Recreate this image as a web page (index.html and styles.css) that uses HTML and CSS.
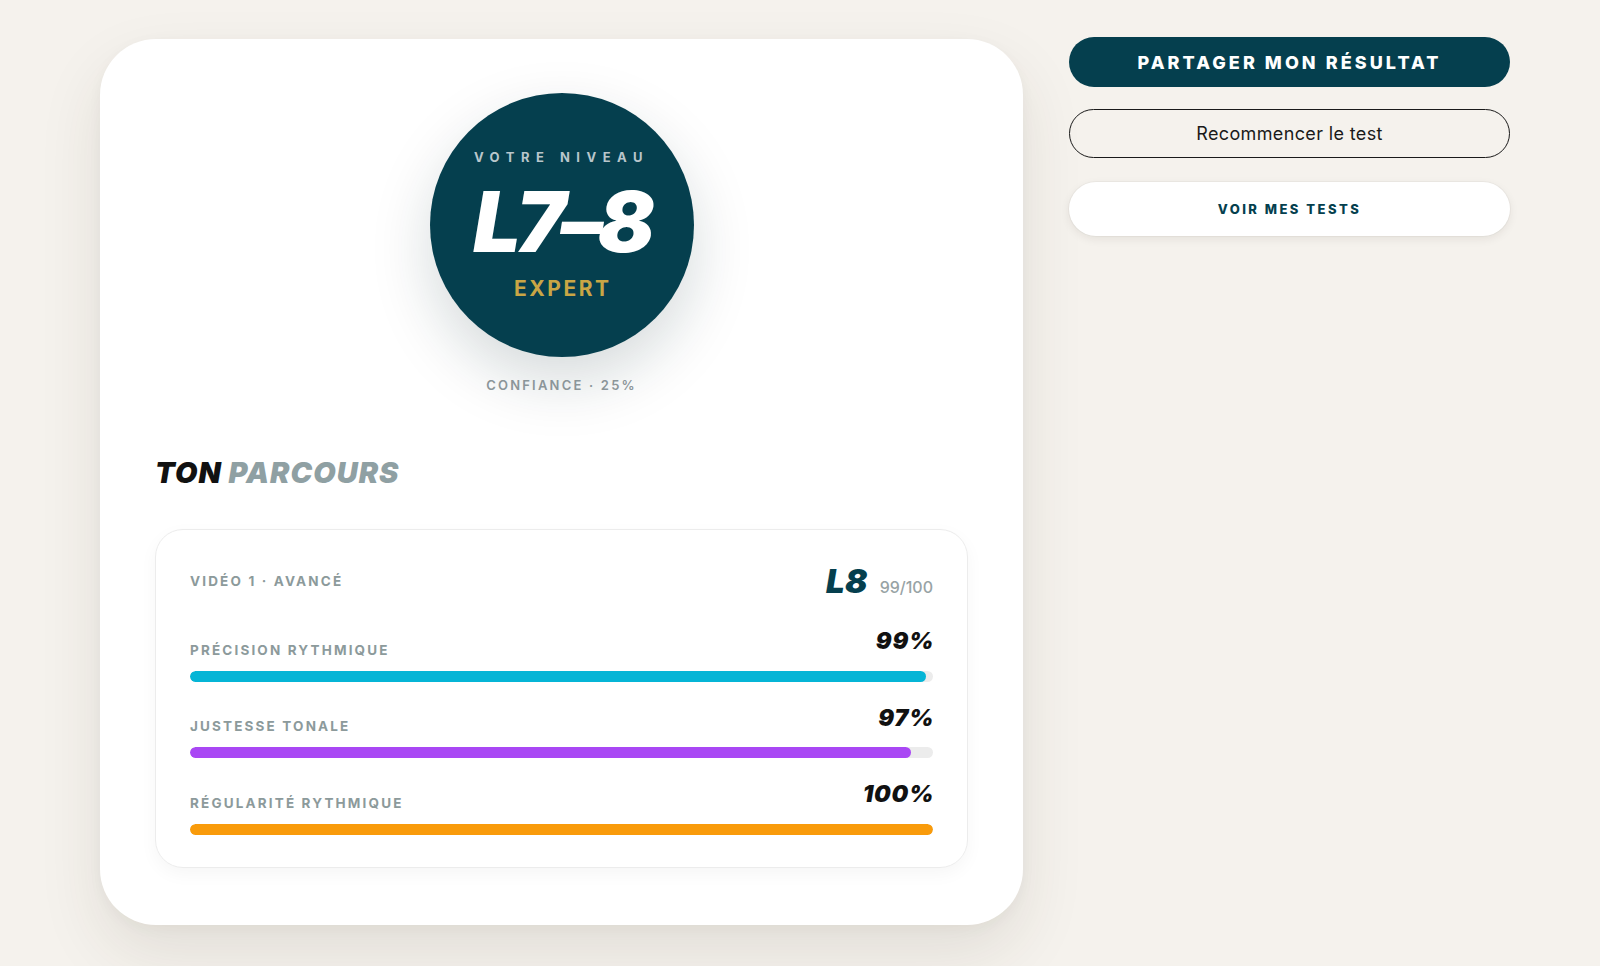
FILE: index.html
```html
<!DOCTYPE html>
<html lang="fr">
<head>
<meta charset="utf-8">
<title>Résultat du test</title>
<link rel="stylesheet" href="styles.css">
</head>
<body>
<main class="page">
  <section class="result-card">
    <div class="hero">
      <div class="level-badge">
        <span class="level-kicker">VOTRE NIVEAU</span>
        <span class="level-value">L7–8</span>
        <span class="level-name">EXPERT</span>
      </div>
      <p class="confidence">CONFIANCE · 25%</p>
    </div>

    <h2 class="section-title"><span class="title-strong">TON</span> <span class="title-soft">PARCOURS</span></h2>

    <article class="video-card">
      <header class="video-head">
        <span class="eyebrow">VIDÉO 1 · AVANCÉ</span>
        <span class="video-score"><span class="video-level">L8</span><span class="video-points">99/100</span></span>
      </header>

      <div class="metric">
        <div class="metric-row">
          <span class="eyebrow">PRÉCISION RYTHMIQUE</span>
          <span class="metric-pct">99%</span>
        </div>
        <div class="track"><div class="fill fill-cyan" style="width:99%"></div></div>
      </div>

      <div class="metric">
        <div class="metric-row">
          <span class="eyebrow">JUSTESSE TONALE</span>
          <span class="metric-pct">97%</span>
        </div>
        <div class="track"><div class="fill fill-purple" style="width:97%"></div></div>
      </div>

      <div class="metric">
        <div class="metric-row">
          <span class="eyebrow">RÉGULARITÉ RYTHMIQUE</span>
          <span class="metric-pct">100%</span>
        </div>
        <div class="track"><div class="fill fill-orange" style="width:100%"></div></div>
      </div>
    </article>
  </section>

  <aside class="actions">
    <button class="btn btn-primary">PARTAGER MON RÉSULTAT</button>
    <button class="btn btn-outline">Recommencer le test</button>
    <button class="btn btn-light">VOIR MES TESTS</button>
  </aside>
</main>
</body>
</html>
```

FILE: styles.css
```css
* {
  box-sizing: border-box;
}

html,
body {
  margin: 0;
  padding: 0;
}

body {
  background: #f5f2ed;
  font-family: Inter, "Noto Sans", "Liberation Sans", sans-serif;
  color: #111;
  min-height: 966px;
}

.page {
  display: flex;
  align-items: flex-start;
  gap: 46px;
  padding: 37px 0 0 100px;
}

/* main result card */
.result-card {
  width: 923px;
  margin-top: 2px;
  background: #fff;
  border-radius: 56px;
  padding: 54px 55px 57px;
  box-shadow: 0 28px 64px rgba(60, 50, 30, 0.1), 0 4px 14px rgba(60, 50, 30, 0.04);
}

.hero {
  display: flex;
  flex-direction: column;
  align-items: center;
}

.level-badge {
  width: 264px;
  height: 264px;
  border-radius: 50%;
  background: #053f4e;
  display: flex;
  flex-direction: column;
  align-items: center;
  justify-content: center;
  box-shadow: 0 24px 60px rgba(10, 40, 50, 0.17);
}

.level-kicker {
  font-size: 13px;
  line-height: 16px;
  font-weight: 700;
  letter-spacing: 0.5em;
  color: #b9c6cb;
}

.level-value {
  margin-top: 15px;
  font-size: 84px;
  line-height: 84px;
  font-weight: 900;
  font-style: italic;
  letter-spacing: -0.06em;
  color: #fff;
}

.level-name {
  margin-top: 12px;
  font-size: 21px;
  line-height: 26px;
  font-weight: 700;
  letter-spacing: 0.12em;
  margin-right: -0.12em;
  color: #c9a645;
}

.confidence {
  margin: 20px 0 0;
  font-size: 13px;
  line-height: 16px;
  font-weight: 600;
  letter-spacing: 0.17em;
  color: #8b9599;
}

.section-title {
  margin: 63px 0 0;
  font-size: 29px;
  line-height: 34px;
  font-weight: 900;
  font-style: italic;
  letter-spacing: 0.035em;
}

.title-strong {
  color: #111;
}

.title-soft {
  color: #8fa0a3;
}

/* per-video breakdown */
.video-card {
  margin-top: 39px;
  border: 1px solid #ececec;
  border-radius: 28px;
  padding: 35px 34px 32px;
  box-shadow: 0 6px 18px rgba(0, 0, 0, 0.04);
}

.video-head {
  display: flex;
  align-items: center;
  justify-content: space-between;
  height: 32px;
  margin-bottom: 32px;
}

.eyebrow {
  font-size: 13.5px;
  line-height: 13px;
  font-weight: 700;
  letter-spacing: 0.16em;
  color: #8c9a9b;
}

.video-score {
  display: flex;
  align-items: baseline;
  gap: 12px;
}

.video-level {
  font-size: 33px;
  line-height: 32px;
  font-weight: 900;
  font-style: italic;
  letter-spacing: 0.01em;
  color: #053f4e;
}

.video-points {
  font-size: 16px;
  font-weight: 500;
  color: #98a3a5;
}

.metric + .metric {
  margin-top: 24px;
}

.metric-row {
  display: flex;
  align-items: flex-end;
  justify-content: space-between;
}

.metric-pct {
  font-size: 23.5px;
  line-height: 23.5px;
  padding-bottom: 4px;
  font-weight: 900;
  font-style: italic;
  letter-spacing: 0.03em;
  margin-right: -0.05em;
  color: #111;
}

.track {
  margin-top: 14px;
  height: 11px;
  border-radius: 6px;
  background: #ececec;
  overflow: hidden;
}

.fill {
  height: 100%;
  border-radius: 6px;
}

.fill-cyan {
  background: #05b5d6;
}

.fill-purple {
  background: #a947f4;
}

.fill-orange {
  background: #f99b0b;
}

/* side actions */
.actions {
  width: 441px;
  display: flex;
  flex-direction: column;
  gap: 22px;
}

.btn {
  display: flex;
  align-items: center;
  justify-content: center;
  width: 100%;
  border-radius: 999px;
  font-family: inherit;
  cursor: pointer;
}

.btn-primary {
  height: 50px;
  border: none;
  background: #053f4e;
  color: #fff;
  font-size: 18px;
  font-weight: 800;
  letter-spacing: 0.17em;
}

.btn-outline {
  height: 49px;
  border: 1.5px solid #1a1a1a;
  background: transparent;
  color: #1a1a1a;
  font-size: 18px;
  font-weight: 400;
  letter-spacing: 0.02em;
}

.btn-light {
  height: 54px;
  margin-top: 2px;
  border: none;
  background: #fff;
  color: #053f4e;
  font-size: 13px;
  font-weight: 800;
  letter-spacing: 0.19em;
  box-shadow: 0 3px 10px rgba(40, 30, 10, 0.08), 0 0 0 1px rgba(0, 0, 0, 0.03);
}
```
